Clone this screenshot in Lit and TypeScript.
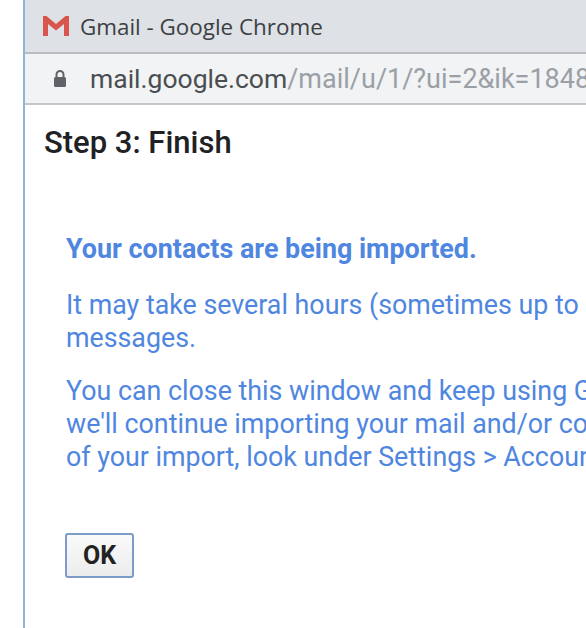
import { LitElement, html, css } from "lit";
import { customElement } from "lit/decorators.js";

@customElement("app-root")
export class AppRoot extends LitElement {
  static styles = css`
    :host { display: block; width: 586px; height: 628px; overflow: hidden; background: #fff; font-family: Roboto, "Liberation Sans", sans-serif; }
    .window { margin-left: 23px; height: 628px; border-left: 2px solid #8fb4dc; display: flex; flex-direction: column; overflow: hidden; }
    .title { height: 52px; flex: none; background: #dee1e6; border-bottom: 2px solid #b9bcc1; display: flex; align-items: center; gap: 9px; padding-left: 16px; font-family: "Open Sans", sans-serif; font-size: 22.4px; color: #3c4043; white-space: nowrap; }
    .addr { height: 49px; flex: none; background: #f1f3f4; border-bottom: 2px solid #c4c6c9; display: flex; align-items: center; padding-left: 27px; gap: 22px; font-size: 27px; color: #9aa0a6; white-space: nowrap; }
    .addr svg { flex: none; }
    .addr b { font-weight: 400; font-size: 26.500px; color: #4a4e52; }
    .body { flex: 1; padding: 0 0 0 19px; white-space: nowrap; }
    h1 { margin: 18px 0 0; font-size: 31px; line-height: 40px; font-weight: 500; color: #202124; }
    .msg { margin: 70px 0 0 22px; font-size: 26.800px; line-height: 33px; color: #4f86e0; }
    .msg p { margin: 0 0 20px; }
    .msg .lead { font-weight: 700; font-size: 26.900px; margin-bottom: 23px; }
    .ok { display: block; margin: 59px 0 0 21px; width: 69px; height: 45px; box-sizing: border-box; border: 2px solid #7c9bc9; border-radius: 3px; background: linear-gradient(#fafafa, #ececec); font: 700 25px Roboto, sans-serif; color: #222; padding: 0; }
  `;
  render() {
    return html`<div class="window">
      <div class="title">
        <svg width="30" height="24" viewBox="0 0 30 24"><path d="M2 22V2h3.500L15 10l9.500-8H28v20h-5V10l-8 6.500L7 10v12z" fill="#d9564d"/></svg>
        <span>Gmail - Google Chrome</span>
      </div>
      <div class="addr">
        <svg width="16" height="20" viewBox="0 0 16 20"><path d="M4.500 8V5.500a3.500 3.500 0 0 1 7 0V8" fill="none" stroke="#5f6368" stroke-width="2"/><rect x="2" y="8" width="12" height="10" rx="1.500" fill="#5f6368"/></svg>
        <span><b>mail.google.com</b>/mail/u/1/?ui=2&amp;ik=1848</span>
      </div>
      <div class="body">
        <h1>Step 3: Finish</h1>
        <div class="msg">
          <p class="lead">Your contacts are being imported.</p>
          <p>It may take several hours (sometimes up to<br>messages.</p>
          <p>You can close this window and keep using G<br>we'll continue importing your mail and/or co<br>of your import, look under Settings &gt; Accoun</p>
        </div>
        <button class="ok">OK</button>
      </div>
    </div>`;
  }
}
